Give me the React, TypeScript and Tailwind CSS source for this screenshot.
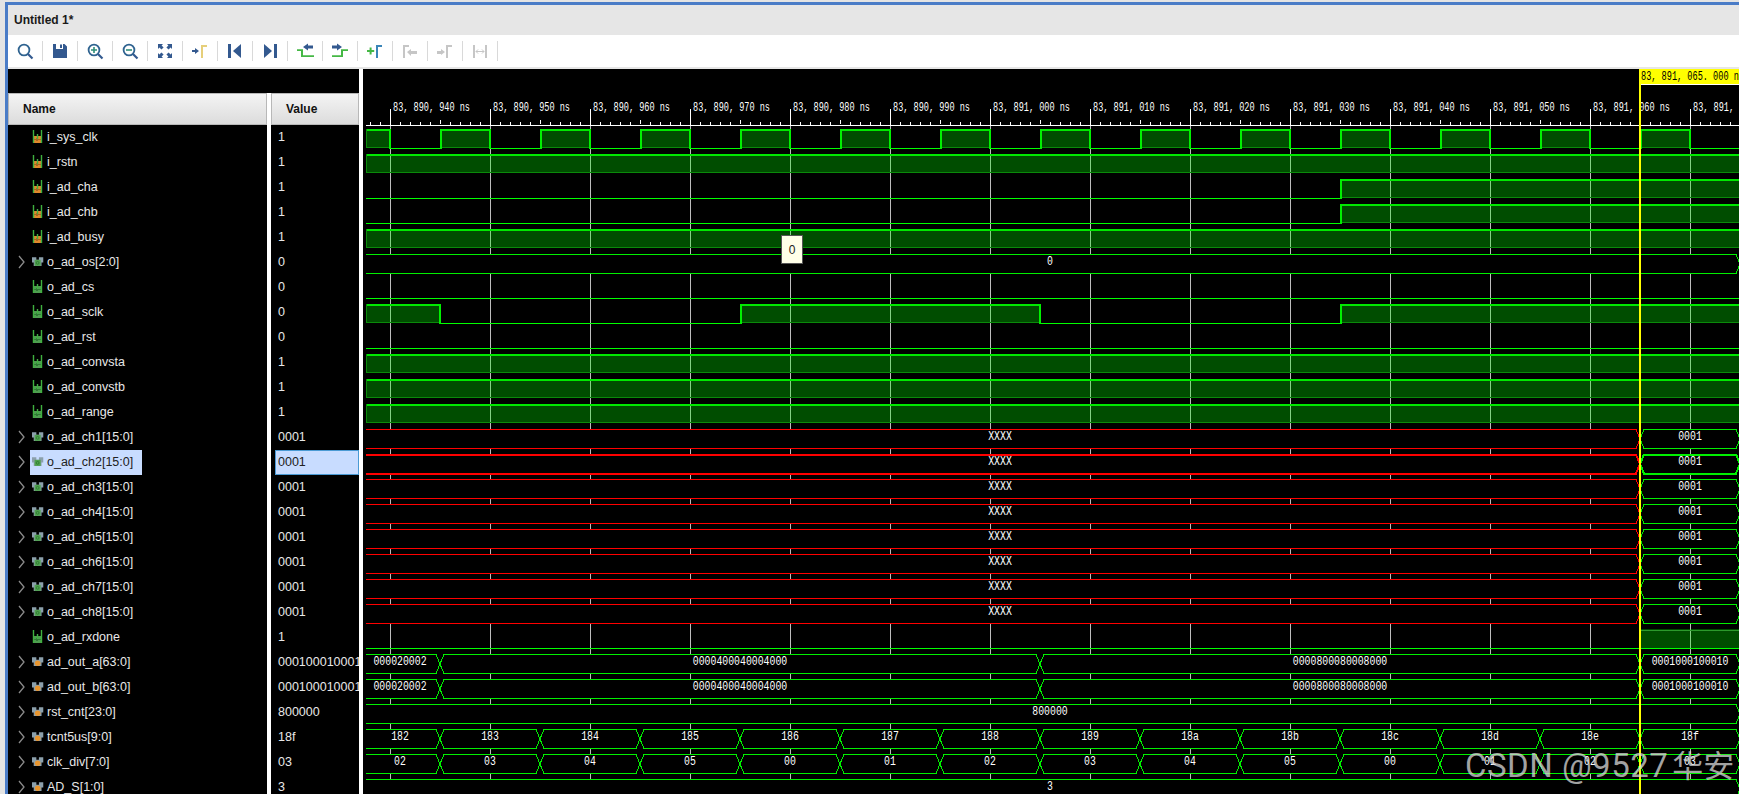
import React from 'react';

type Kind = 'in' | 'out' | 'busOut' | 'busInt';

const signals: { name: string; value: string; kind: Kind }[] = [
  { name: 'i_sys_clk', value: '1', kind: 'in' },
  { name: 'i_rstn', value: '1', kind: 'in' },
  { name: 'i_ad_cha', value: '1', kind: 'in' },
  { name: 'i_ad_chb', value: '1', kind: 'in' },
  { name: 'i_ad_busy', value: '1', kind: 'in' },
  { name: 'o_ad_os[2:0]', value: '0', kind: 'busOut' },
  { name: 'o_ad_cs', value: '0', kind: 'out' },
  { name: 'o_ad_sclk', value: '0', kind: 'out' },
  { name: 'o_ad_rst', value: '0', kind: 'out' },
  { name: 'o_ad_convsta', value: '1', kind: 'out' },
  { name: 'o_ad_convstb', value: '1', kind: 'out' },
  { name: 'o_ad_range', value: '1', kind: 'out' },
  { name: 'o_ad_ch1[15:0]', value: '0001', kind: 'busOut' },
  { name: 'o_ad_ch2[15:0]', value: '0001', kind: 'busOut' },
  { name: 'o_ad_ch3[15:0]', value: '0001', kind: 'busOut' },
  { name: 'o_ad_ch4[15:0]', value: '0001', kind: 'busOut' },
  { name: 'o_ad_ch5[15:0]', value: '0001', kind: 'busOut' },
  { name: 'o_ad_ch6[15:0]', value: '0001', kind: 'busOut' },
  { name: 'o_ad_ch7[15:0]', value: '0001', kind: 'busOut' },
  { name: 'o_ad_ch8[15:0]', value: '0001', kind: 'busOut' },
  { name: 'o_ad_rxdone', value: '1', kind: 'out' },
  { name: 'ad_out_a[63:0]', value: '0001000100010', kind: 'busInt' },
  { name: 'ad_out_b[63:0]', value: '0001000100010', kind: 'busInt' },
  { name: 'rst_cnt[23:0]', value: '800000', kind: 'busInt' },
  { name: 'tcnt5us[9:0]', value: '18f', kind: 'busInt' },
  { name: 'clk_div[7:0]', value: '03', kind: 'busInt' },
  { name: 'AD_S[1:0]', value: '3', kind: 'busInt' },
];

const START = 366;
const END = 1739;
const BUS_START = 360;
const BUS_END = 1740;
const CURSOR = 1640;
const rowTop = (row: number) => 129 + row * 25;

const range = (n: number) => Array.from({ length: n }, (_, i) => i);

/* --- waveform pieces --- */

const Bit = ({ row, high }: { row: number; high: [number, number][] }) => {
  const y0 = rowTop(row);
  const y1 = y0 + 19;
  let last = START;
  const lows: [number, number][] = [];
  high.forEach(([a, b]) => {
    if (a > last) lows.push([last, a]);
    last = b;
  });
  if (last < END) lows.push([last, END]);
  return (
    <g>
      {lows.map(([a, b]) => (
        <rect key={a} x={a} y={y1} width={b - a} height={1} fill="#00ff00" />
      ))}
      {high.map(([a, b]) => (
        <g key={a}>
          <rect x={a} y={y0} width={b - a} height={19} fill="#00ff00" fillOpacity={0.3} />
          <rect x={a} y={y1 - 1} width={b - a} height={1} fill="#0a8a0a" />
          <rect x={a} y={y0} width={b - a} height={2} fill="#00e800" />
          {a > START ? <rect x={a} y={y0} width={2} height={20} fill="#00f000" /> : <rect x={a} y={y0} width={1} height={19} fill="#0a8a0a" />}
          {b < END && <rect x={b - 1} y={y0} width={2} height={20} fill="#00f000" />}
        </g>
      ))}
    </g>
  );
};

const Seg = ({ row, a, b, label, color, thick }: { row: number; a: number; b: number; label: string; color: string; thick?: boolean }) => {
  const hi = rowTop(row) + 0.5;
  const lo = hi + 19;
  const mid = hi + 9.5;
  const points =
    a === BUS_START
      ? `${START},${hi} ${b - 4},${hi} ${b},${mid} ${b - 4},${lo} ${START},${lo}`
      : `${a},${mid} ${a + 4},${hi} ${b - 4},${hi} ${b},${mid} ${b - 4},${lo} ${a + 4},${lo} ${a},${mid}`;
  return (
    <g>
      <polyline points={points} fill="#000" stroke={color} strokeWidth={thick ? 2 : 1} />
      <BusText x={(a + b) / 2} y={rowTop(row) + 11} text={label} />
    </g>
  );
};

const BusText = ({ x, y, text }: { x: number; y: number; text: string }) => (
  <text x={x} y={y} textAnchor="middle" fontSize={12} fill="#fff" textLength={text.length * 5.9} lengthAdjust="spacingAndGlyphs" className="[font-family:'Liberation_Mono',monospace]">
    {text}
  </text>
);

const Bus = ({ row, cuts, labels }: { row: number; cuts: number[]; labels: string[] }) => (
  <g>
    {labels.map((label, i) => (
      <Seg key={i} row={row} a={cuts[i]} b={cuts[i + 1]} label={label} color="#00f000" />
    ))}
  </g>
);

const clkHigh: [number, number][] = [[START, 390], ...range(13).map((i): [number, number] => [440 + i * 100, 490 + i * 100])];
const clkCuts = [BUS_START, ...range(13).map((i) => 440 + i * 100), BUS_END];

const ticks = range(138).map((i) => 370 + i * 10);
const majors = range(14).map((i) => 390 + i * 100);
const stamps = ['890, 940', '890, 950', '890, 960', '890, 970', '890, 980', '890, 990', '891, 000', '891, 010', '891, 020', '891, 030', '891, 040', '891, 050', '891, 060', '891, 070'];

const Waves = () => (
  <svg width={1376} height={725} viewBox="363 69 1376 725" shapeRendering="crispEdges" className="block">
    {/* grid + ruler */}
    {majors.map((x) => (
      <rect key={x} x={x} y={109} width={1} height={685} fill="#bdbdbd" />
    ))}
    <rect x={START} y={125} width={END - START} height={1} fill="#fff" />
    {ticks.map((x) => (
      <rect key={x} x={x} y={(x - 390) % 50 === 0 ? 120 : 122} width={1} height={4} fill="#fff" />
    ))}
    {majors.map((x) => (
      <rect key={x} x={x} y={109} width={1} height={16} fill="#fff" />
    ))}
    {stamps.map((s, i) => (
      <text key={s} x={393 + i * 100} y={111} fontSize={12} fill="#fff" textLength={77} lengthAdjust="spacingAndGlyphs" className="[font-family:'Liberation_Mono',monospace]">
        {`83, ${s} ns`}
      </text>
    ))}

    {/* scalar signals */}
    <Bit row={0} high={clkHigh} />
    <Bit row={1} high={[[START, END]]} />
    <Bit row={2} high={[[1340, END]]} />
    <Bit row={3} high={[[1340, END]]} />
    <Bit row={4} high={[[START, END]]} />
    <Bus row={5} cuts={[BUS_START, BUS_END]} labels={['0']} />
    <Bit row={6} high={[]} />
    <Bit row={7} high={[[START, 440], [740, 1040], [1340, END]]} />
    <Bit row={8} high={[]} />
    <Bit row={9} high={[[START, END]]} />
    <Bit row={10} high={[[START, END]]} />
    <Bit row={11} high={[[START, END]]} />

    {/* data channels, X until the cursor */}
    {range(8).map((i) => (
      <g key={i}>
        <Seg row={12 + i} a={BUS_START} b={CURSOR} label="XXXX" color="#ff0000" thick={i === 1} />
        <Seg row={12 + i} a={CURSOR} b={BUS_END} label="0001" color="#00f000" thick={i === 1} />
      </g>
    ))}

    <rect x={START} y={648} width={END - START} height={1} fill="#00ff00" />
    <rect x={CURSOR} y={629} width={END - CURSOR} height={19} fill="#00ff00" fillOpacity={0.3} />
    <rect x={CURSOR} y={630} width={END - CURSOR} height={1} fill="#2c9a2c" />

    <Bus row={21} cuts={[BUS_START, 440, 1040, CURSOR, BUS_END]} labels={['000020002', '0000400040004000', '0000800080008000', '0001000100010']} />
    <Bus row={22} cuts={[BUS_START, 440, 1040, CURSOR, BUS_END]} labels={['000020002', '0000400040004000', '0000800080008000', '0001000100010']} />
    <Bus row={23} cuts={[BUS_START, BUS_END]} labels={['800000']} />
    <Bus row={24} cuts={clkCuts} labels={['182', '183', '184', '185', '186', '187', '188', '189', '18a', '18b', '18c', '18d', '18e', '18f']} />
    <Bus row={25} cuts={clkCuts} labels={['02', '03', '04', '05', '00', '01', '02', '03', '04', '05', '00', '01', '02', '03']} />
    <Bus row={26} cuts={[BUS_START, BUS_END]} labels={['3']} />

    {/* cursor */}
    <rect x={CURSOR - 1} y={84} width={2} height={710} fill="#ffff00" />
    <rect x={CURSOR - 1} y={69} width={END - CURSOR + 1} height={15} fill="#ffff00" />
    <rect x={CURSOR + 1} y={84} width={END - CURSOR} height={1} fill="#fff" />
    <text x={CURSOR + 1} y={80} fontSize={12} fill="#000" textLength={103} lengthAdjust="spacingAndGlyphs" className="[font-family:'Liberation_Mono',monospace]">
      83, 891, 065. 000 ns
    </text>
  </svg>
);

/* --- signal icons --- */

const SignalIcon = ({ kind }: { kind: Kind }) => {
  if (kind === 'in' || kind === 'out') {
    const box = kind === 'in' ? '#e0882c' : '#4f9e50';
    const inner = kind === 'in' ? '#a8661f' : '#2f7a34';
    return (
      <svg width={13} height={14} viewBox="0 0 13 14" className="shrink-0">
        <rect x={1} y={6} width={8} height={7} fill={box} />
        <rect x={1} y={9} width={8} height={1} fill={inner} />
        <rect x={4} y={8} width={2} height={3} fill={inner} />
        <path d="M1.5 0v13M5.5 4v5M9.5 0v13" stroke="#3fb03f" strokeWidth={1.4} fill="none" />
      </svg>
    );
  }
  return (
    <svg width={13} height={14} viewBox="0 0 15 15" className="shrink-0">
      <path d="M0 2h5v3h3V2h5v6h-2v4H2V8H0z" fill="#8ca0ac" />
      {kind === 'busOut' ? (
        <>
          <rect x={3} y={5} width={7} height={7} fill="#4fa24f" />
          <circle cx={6.5} cy={8.5} r={1.6} fill="none" stroke="#2c7a30" />
        </>
      ) : (
        <circle cx={6.5} cy={9} r={3.2} fill="#e8952e" />
      )}
    </svg>
  );
};

const Chevron = () => (
  <svg width={7} height={14} viewBox="0 0 7 14" className="shrink-0">
    <path d="M1 1l5 6-5 6" fill="none" stroke="#8a8a8a" strokeWidth={1.3} />
  </svg>
);

/* --- toolbar icons, 18x18 --- */

const BLUE = '#33598f';
const GREEN = '#45b845';
const GRAY = '#c6c6c6';

const Lens = ({ children }: { children?: React.ReactNode }) => (
  <>
    <circle cx={8} cy={8} r={5.4} fill="none" stroke="#2f6390" strokeWidth={1.8} />
    <path d="M12 12l4.5 4.5" stroke={BLUE} strokeWidth={2.2} />
    {children}
  </>
);

const ToolIcon = ({ n }: { n: number }) => {
  switch (n) {
    case 0:
      return <Lens />;
    case 1:
      return <path d="M2 2h3v5h7V2h1.5L16 4.5V16H2zM9 2.5h2V6H9z" fill={BLUE} fillRule="evenodd" />;
    case 2:
      return (
        <Lens>
          <path d="M5 8h6M8 5v6" stroke="#2f8f7a" strokeWidth={1.6} />
        </Lens>
      );
    case 3:
      return (
        <Lens>
          <path d="M5 8h6" stroke="#2f8f7a" strokeWidth={1.6} />
        </Lens>
      );
    case 4:
      return <path d="M2 2h5L5.6 3.4 7.6 5.4 5.4 7.6 3.4 5.6 2 7zM16 2v5l-1.4-1.4-2 2-2.2-2.2 2-2L11 2zM2 16v-5l1.4 1.4 2-2 2.2 2.2-2 2L7 16zM16 16h-5l1.4-1.4-2-2 2.2-2.2 2 2L16 11z" fill={BLUE} />;
    case 5:
      return (
        <>
          <path d="M1 8h3V6l4 3-4 3v-2H1z" fill={BLUE} />
          <path d="M10 16V3h6v2h-4v11z" fill="#e6cf7a" />
        </>
      );
    case 6:
      return (
        <>
          <rect x={2} y={2} width={3} height={14} fill={BLUE} />
          <path d="M15 2v14L7 9z" fill={BLUE} />
        </>
      );
    case 7:
      return (
        <>
          <rect x={13} y={2} width={3} height={14} fill={BLUE} />
          <path d="M3 2v14l8-7z" fill={BLUE} />
        </>
      );
    case 8:
      return (
        <>
          <path d="M1 9h4v6h13v-1.8H7V7.2H1z" fill={GREEN} />
          <path d="M7 5l5-3.5V3.5h5v3h-5v2z" fill={BLUE} />
        </>
      );
    case 9:
      return (
        <>
          <path d="M1 15h11V9h5V7.2h-7v6H1z" fill={GREEN} />
          <path d="M11 5L6 1.5V3.5H1v3h5v2z" fill={BLUE} />
        </>
      );
    case 10:
      return (
        <>
          <path d="M1 8h2.6V5.4h2V8h2.6v2H5.6v2.6h-2V10H1z" fill={GREEN} />
          <path d="M10 16V3h6v2h-4v11z" fill="#3a85b8" />
        </>
      );
    case 11:
      return (
        <>
          <path d="M2 16V3h6v2H4v11z" fill={GRAY} />
          <path d="M6 10l4-3v2h6v3h-6v2z" fill={GRAY} />
        </>
      );
    case 12:
      return (
        <>
          <path d="M1 9h4V7l4 3-4 3v-1H1z" fill={GRAY} />
          <path d="M10 16V3h6v2h-4v11z" fill={GRAY} />
        </>
      );
    default:
      return (
        <>
          <path d="M2 3h2v13H2zM14 3h2v13h-2z" fill={GRAY} />
          <path d="M5 9.5h8M5 9.5l2-2M5 9.5l2 2M13 9.5l-2-2M13 9.5l-2 2" stroke={GRAY} strokeWidth={1} fill="none" />
        </>
      );
  }
};

export default function App() {
  return (
    <div className="relative w-[1739px] h-[794px] overflow-hidden bg-[#e4e4e4] pt-[2px] pl-[5px] [font-family:'Liberation_Sans',sans-serif]">
      <div className="flex flex-col h-[792px] border-t-[3px] border-l-[3px] border-[#4a7cc7]">
        {/* title */}
        <div className="flex items-center h-[30px] shrink-0 pl-[6px] bg-[#e6e6e6] text-[12px] font-bold text-[#1a1a1a]">Untitled 1*</div>

        {/* toolbar */}
        <div className="flex items-center h-[32px] shrink-0 bg-white">
          {range(14).map((n) => (
            <div key={n} className="flex items-center justify-center w-[35px] h-[20px] border-r border-[#d9d9d9]">
              <svg width={18} height={18} viewBox="0 0 18 18">
                <ToolIcon n={n} />
              </svg>
            </div>
          ))}
        </div>
        <div className="h-[2px] shrink-0 bg-[#e6e6e6]" />

        {/* main */}
        <div className="flex flex-1 bg-white overflow-hidden">
          <div className="w-[351px] shrink-0 flex flex-col">
            <div className="h-[24px] shrink-0 bg-black" />
            <div className="flex">
              <div className="w-[259px] shrink-0 mr-[4px] bg-black">
                <div className="flex items-center h-[32px] pl-[14px] text-[12px] font-bold text-[#111] border border-[#b8b8b8] bg-gradient-to-b from-[#f4f4f4] to-[#dcdcdc]">Name</div>
                {signals.map((s, i) => (
                  <div key={s.name} className="flex items-center h-[25px]">
                    <div className="flex justify-center w-[22px] pl-[4px] pb-[1px] shrink-0">{s.kind.startsWith('bus') && <Chevron />}</div>
                    <div className={`flex items-center gap-[2px] h-[25px] pl-[2px] pr-[9px] pb-[1px] text-[12.5px] ${i === 13 ? 'bg-[#c8dcff] text-[#222]' : 'text-[#e8e8e8]'}`}>
                      <SignalIcon kind={s.kind} />
                      <span className="whitespace-nowrap">{s.name}</span>
                    </div>
                  </div>
                ))}
              </div>
              <div className="w-[88px] shrink-0 bg-black overflow-hidden">
                <div className="flex items-center h-[32px] pl-[14px] text-[12px] font-bold text-[#111] border border-[#b8b8b8] bg-gradient-to-b from-[#f4f4f4] to-[#dcdcdc]">Value</div>
                {signals.map((s, i) => (
                  <div key={s.name} className="h-[25px] pl-[4px] flex">
                    <div className={`flex items-center flex-1 pb-[1px] text-[12.5px] whitespace-nowrap overflow-hidden ${i === 13 ? 'pl-[2px] bg-[#c8dcff] border border-[#4a9ad4] text-[#222]' : 'pl-[3px] text-[#e8e8e8]'}`}>{s.value}</div>
                  </div>
                ))}
              </div>
            </div>
          </div>
          <div className="ml-[4px] bg-black">
            <Waves />
          </div>
        </div>
      </div>

      {/* value tooltip */}
      <div className="absolute left-[781px] top-[235px] flex items-center justify-center w-[22px] h-[29px] bg-[#ffffe8] border border-[#555] text-[12px] text-[#222]">0</div>

      {/* watermark */}
      <div className="absolute left-[1465px] top-[741px] text-[33px] tracking-[0.5px] leading-[46px] whitespace-nowrap text-[#d8d8d8]/75 [font-family:Roboto,sans-serif]">
        CSDN @9527<span className="ml-[4px] text-[31px] tracking-normal [font-family:'Noto_Sans_CJK_SC',sans-serif]">华安</span>
      </div>
    </div>
  );
}
